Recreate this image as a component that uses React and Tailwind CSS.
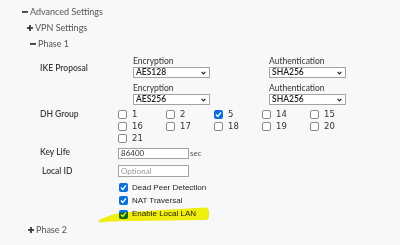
import React from 'react';

const labelFont = { fontFamily: 'Lato, "Open Sans", sans-serif' };

function Minus() {
    return (
        <svg width="6" height="6" viewBox="0 0 6 6" className="shrink-0">
            <rect x="0" y="2" width="6" height="1.8" fill="#3a3a3a" />
        </svg>
    );
}

function Plus() {
    return (
        <svg width="6" height="6" viewBox="0 0 6 6" className="shrink-0">
            <rect x="0" y="2.1" width="6" height="1.8" fill="#3a3a3a" />
            <rect x="2.1" y="0" width="1.8" height="6" fill="#3a3a3a" />
        </svg>
    );
}

function TreeRow({ open, label, indent }) {
    return (
        <div className={`flex items-center h-[16px] gap-[2px] text-[9px] text-[#555] ${indent}`}>
            {open ? <Minus /> : <Plus />}
            <span>{label}</span>
        </div>
    );
}

function Select({ value }) {
    return (
        <div className="w-[77px] h-[11px] bg-white border border-[#a3a3a3] flex items-center justify-between pl-[2px] pr-[3px]">
            <span className="text-[8.5px] font-semibold text-[#222] leading-none">{value}</span>
            <svg width="5" height="4" viewBox="0 0 5 4">
                <path d="M0.6 0.8 L2.5 2.8 L4.4 0.8" stroke="#222" strokeWidth="1.2" fill="none" />
            </svg>
        </div>
    );
}

function Box({ checked }) {
    if (checked) {
        return (
            <div className="w-[9px] h-[9px] rounded-[2px] bg-[#0b6fdb] flex items-center justify-center shrink-0">
                <svg width="7" height="7" viewBox="0 0 7 7">
                    <path d="M1 3.6 L2.8 5.4 L6 1.4" stroke="white" strokeWidth="1.4" fill="none" />
                </svg>
            </div>
        );
    }
    return <div className="w-[9px] h-[9px] rounded-[2px] bg-white border border-[#8a8a8a] shrink-0" />;
}

function Num({ n, checked }) {
    return (
        <div className="flex items-center gap-[5px]">
            <Box checked={checked} />
            <span className="text-[8.5px] text-[#333]" style={{ fontFamily: '"DejaVu Sans", sans-serif' }}>{n}</span>
        </div>
    );
}

function Label({ children, className = '' }) {
    return <div className={`text-[8.5px] font-semibold text-[#3a3a3a] ${className}`}>{children}</div>;
}

export default function App() {
    const dh = [[1, 2, 5, 14, 15], [16, 17, 18, 19, 20], [21]];

    return (
        <div className="w-[400px] h-[245px] bg-[#f8f8fb] relative overflow-hidden" style={labelFont}>
            <div className="pt-[4px]">
                <TreeRow open label="Advanced Settings" indent="pl-[22px]" />
                <TreeRow label="VPN Settings" indent="pl-[27px]" />
                <TreeRow open label="Phase 1" indent="pl-[30px]" />

                <div className="pl-[40px] grid grid-cols-[78px_1fr]">
                    <Label className="pt-[7px] mt-[3px] leading-[12px]">IKE Proposal</Label>
                    <div className="pl-[15px] mt-[3px] flex flex-col gap-[4px]">
                        {[['AES128', 'SHA256'], ['AES256', 'SHA256']].map(([enc, auth], i) => (
                            <div key={i} className="flex">
                                <div className="w-[136px]">
                                    <div className="text-[8.5px] leading-[12px] text-[#333]">Encryption</div>
                                    <Select value={enc} />
                                </div>
                                <div>
                                    <div className="text-[8.5px] leading-[12px] text-[#333]">Authentication</div>
                                    <Select value={auth} />
                                </div>
                            </div>
                        ))}
                    </div>

                    <Label className="mt-[3px] leading-[12px]">DH Group</Label>
                    <div className="mt-[3px]">
                        {dh.map((row, i) => (
                            <div key={i} className="grid grid-cols-[repeat(5,48px)] h-[12px] items-center">
                                {row.map((n) => (
                                    <Num key={n} n={n} checked={n === 5} />
                                ))}
                            </div>
                        ))}
                    </div>

                    <Label className="mt-[3px] leading-[11px]">Key Life</Label>
                    <div className="mt-[3px] flex items-center gap-[1px]">
                        <div className="w-[71px] h-[11px] bg-white border border-[#a3a3a3] flex items-center pl-[2px] text-[8px] text-[#333]">86400</div>
                        <span className="text-[8px] text-[#555]">sec</span>
                    </div>

                    <Label className="mt-[6px] leading-[12px] pl-[2px]">Local ID</Label>
                    <div className="mt-[6px]">
                        <div className="w-[71px] h-[12px] bg-white border border-[#a3a3a3] flex items-center pl-[2px] text-[8px] text-[#999]">Optional</div>
                    </div>

                    <div />
                    <div className="mt-[4px]">
                        {['Dead Peer Detection', 'NAT Traversal', 'Enable Local LAN'].map((t, i) => (
                            <div key={t} className={`flex items-center gap-[4px] pl-[1px] ${i === 2 ? 'h-[14px]' : 'h-[13px]'}`}>
                                <Box checked />
                                <span className="text-[8px] text-[#222]" style={{ fontFamily: '"Liberation Sans", sans-serif' }}>{t}</span>
                            </div>
                        ))}
                    </div>
                </div>

                <div className="mt-[1px]">
                    <TreeRow label="Phase 2" indent="pl-[28px]" />
                </div>
            </div>

            <svg className="absolute left-0 top-0 pointer-events-none mix-blend-multiply" width="400" height="245">
                <path
                    d="M99 220 C 108 216 116 212.5 130 212 L 204 207.5 Q 209 207.5 209 211 L 209 217 Q 209 220 205 220 L 132 221 C 118 221 108 221.5 99 222.5 Z"
                    fill="#f6f510"
                />
            </svg>
        </div>
    );
}
